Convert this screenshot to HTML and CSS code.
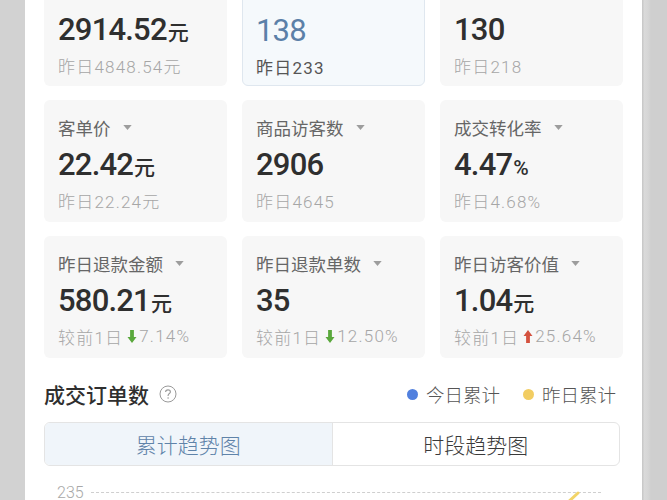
FILE: index.html
```html
<!DOCTYPE html>
<html lang="zh-CN">
<head>
<meta charset="utf-8">
<title>数据概览</title>
<link rel="stylesheet" href="styles.css">
</head>
<body>
<div class="screen">
  <div class="side side-left"></div>
  <main class="panel">
    <div class="grid">
      <div class="card card-top">
        <div class="value">2914.52<span class="unit">元</span></div>
        <div class="sub">昨日4848.54元</div>
      </div>
      <div class="card card-top card-active">
        <div class="value">138</div>
        <div class="sub">昨日233</div>
      </div>
      <div class="card card-top">
        <div class="value">130</div>
        <div class="sub">昨日218</div>
      </div>

      <div class="card">
        <div class="label">客单价<svg class="caret" viewBox="0 0 10 6"><path d="M0 0H10L5 6Z"/></svg></div>
        <div class="value">22.42<span class="unit">元</span></div>
        <div class="sub">昨日22.24元</div>
      </div>
      <div class="card">
        <div class="label">商品访客数<svg class="caret" viewBox="0 0 10 6"><path d="M0 0H10L5 6Z"/></svg></div>
        <div class="value">2906</div>
        <div class="sub">昨日4645</div>
      </div>
      <div class="card">
        <div class="label">成交转化率<svg class="caret" viewBox="0 0 10 6"><path d="M0 0H10L5 6Z"/></svg></div>
        <div class="value">4.47<span class="unit">%</span></div>
        <div class="sub">昨日4.68%</div>
      </div>

      <div class="card">
        <div class="label">昨日退款金额<svg class="caret" viewBox="0 0 10 6"><path d="M0 0H10L5 6Z"/></svg></div>
        <div class="value">580.21<span class="unit">元</span></div>
        <div class="sub">较前1日<svg class="arrow arrow-down" viewBox="0 0 9 13"><path d="M2.6 0H6.4V7H9L4.5 13L0 7H2.6Z"/></svg>7.14%</div>
      </div>
      <div class="card">
        <div class="label">昨日退款单数<svg class="caret" viewBox="0 0 10 6"><path d="M0 0H10L5 6Z"/></svg></div>
        <div class="value">35</div>
        <div class="sub">较前1日<svg class="arrow arrow-down" viewBox="0 0 9 13"><path d="M2.6 0H6.4V7H9L4.5 13L0 7H2.6Z"/></svg>12.50%</div>
      </div>
      <div class="card">
        <div class="label">昨日访客价值<svg class="caret" viewBox="0 0 10 6"><path d="M0 0H10L5 6Z"/></svg></div>
        <div class="value">1.04<span class="unit">元</span></div>
        <div class="sub">较前1日<svg class="arrow arrow-up" viewBox="0 0 9 13"><path d="M2.6 13H6.4V6H9L4.5 0L0 6H2.6Z"/></svg>25.64%</div>
      </div>
    </div>

    <section class="orders">
      <div class="orders-head">
        <div class="title">成交订单数
          <svg class="help" viewBox="0 0 18 18"><circle cx="9" cy="9" r="8" fill="none" stroke="#9a9a9a" stroke-width="1"/><path d="M6.6 7.1C6.6 5.7 7.6 4.9 9 4.9C10.4 4.9 11.4 5.7 11.4 6.9C11.4 8.4 9.1 8.6 9.1 10.4V11" fill="none" stroke="#9a9a9a" stroke-width="1.1"/><circle cx="9.1" cy="13" r="0.8" fill="#9a9a9a"/></svg>
        </div>
        <div class="legend">
          <span class="legend-item"><i class="dot dot-blue"></i>今日累计</span>
          <span class="legend-item"><i class="dot dot-yellow"></i>昨日累计</span>
        </div>
      </div>
      <div class="tabs">
        <div class="tab tab-active">累计趋势图</div>
        <div class="tab">时段趋势图</div>
      </div>
      <div class="chart">
        <span class="axis">235</span>
        <span class="gridline"></span>
        <svg class="series" viewBox="0 0 20 16"><path d="M2 15L14 4" stroke="#f2d468" stroke-width="3" fill="none" stroke-linecap="round"/></svg>
      </div>
    </section>
  </main>
  <div class="side side-right"></div>
</div>
</body>
</html>
```

FILE: styles.css
```css
html, body {
  margin: 0;
  padding: 0;
  height: 500px;
  overflow: hidden;
  background: #d2d2d2;
  font-family: Roboto, "Noto Sans CJK SC", sans-serif;
}

.screen {
  display: flex;
  width: 667px;
  height: 500px;
}

.side {
  flex: none;
  width: 25px;
  background: #d2d2d2;
}

.side-right {
  background: linear-gradient(to right, #c9c9c9 0, #c9c9c9 1px, #dadada 2px, #d6d6d6 6px, #cfcfcf 9px, #cfcfcf 100%);
}

.panel {
  flex: none;
  width: 617px;
  box-sizing: border-box;
  padding: 0 19px;
  background: #ffffff;
}

.grid {
  display: grid;
  grid-template-columns: repeat(3, 183px);
  grid-auto-rows: 122px;
  column-gap: 15px;
  row-gap: 14px;
  margin-top: -36px;
}

.card {
  box-sizing: border-box;
  padding: 14px 14px 0;
  background: #f7f7f7;
  border-radius: 6px;
}

.card-top {
  padding-top: 47px;
}

.card-active {
  background: #f5f9fc;
  border: 1px solid #dfe7ef;
  padding-left: 13px;
  padding-right: 13px;
}

.card-top .value {
  margin-top: 0;
}

.card-top .sub {
  margin-top: 4px;
}

.label {
  display: flex;
  align-items: center;
  height: 26px;
  font-size: 17.5px;
  color: #666666;
  white-space: nowrap;
}

.caret {
  width: 9px;
  height: 5px;
  margin-left: 12px;
  fill: #9d9d9d;
}

.value {
  margin-top: 6px;
  height: 38px;
  line-height: 38px;
  font-size: 31px;
  font-weight: 500;
  letter-spacing: -0.8px;
  color: #2f2f2f;
  white-space: nowrap;
}

.card-active .value {
  color: #5b80a8;
  font-weight: 400;
}

.unit {
  font-size: 21px;
  letter-spacing: 0;
  margin-left: 1px;
}

.sub {
  display: flex;
  align-items: center;
  margin-top: 4px;
  height: 24px;
  font-size: 17px;
  font-weight: 300;
  letter-spacing: 1.2px;
  color: #a6a6a6;
  white-space: nowrap;
}

.card-active .sub {
  color: #555555;
  font-weight: 400;
}

.arrow {
  width: 10px;
  height: 13px;
  margin: 0 2px 0 4px;
}

.arrow-down { fill: #5aa83c; }
.arrow-up { fill: #d4523f; }

.orders {
  margin-top: 18px;
}

.orders-head {
  display: flex;
  align-items: center;
  justify-content: space-between;
  height: 36px;
  padding-right: 7px;
}

.title {
  display: flex;
  align-items: center;
  font-size: 21px;
  font-weight: 500;
  color: #2f2f2f;
}

.help {
  width: 18px;
  height: 18px;
  margin-left: 10px;
}

.legend {
  display: flex;
  gap: 23px;
  font-size: 18.5px;
  font-weight: 300;
  color: #555555;
}

.legend-item {
  display: flex;
  align-items: center;
}

.dot {
  width: 11px;
  height: 11px;
  border-radius: 50%;
  margin-right: 8px;
}

.dot-blue { background: #5180de; }
.dot-yellow { background: #f2cd62; }

.tabs {
  display: flex;
  margin-top: 10px;
  margin-right: 3px;
  height: 44px;
  box-sizing: border-box;
  border: 1px solid #e4e4e4;
  border-radius: 6px;
  overflow: hidden;
}

.tab {
  flex: 1;
  display: flex;
  align-items: center;
  justify-content: center;
  font-size: 21px;
  font-weight: 300;
  color: #3a3a3a;
}

.tab-active {
  background: #f0f5fa;
  color: #5f83a9;
  border-right: 1px solid #e4e4e4;
}

.chart {
  position: relative;
  display: flex;
  align-items: center;
  margin-top: 17px;
  padding-left: 13px;
  height: 18px;
}

.axis {
  font-size: 16px;
  font-weight: 300;
  color: #a8a8a8;
}

.gridline {
  flex: none;
  width: 510px;
  margin-left: 7px;
  border-top: 1px dashed #cfcfcf;
}

.series {
  position: absolute;
  left: 520px;
  top: 6px;
  width: 20px;
  height: 16px;
}
```
